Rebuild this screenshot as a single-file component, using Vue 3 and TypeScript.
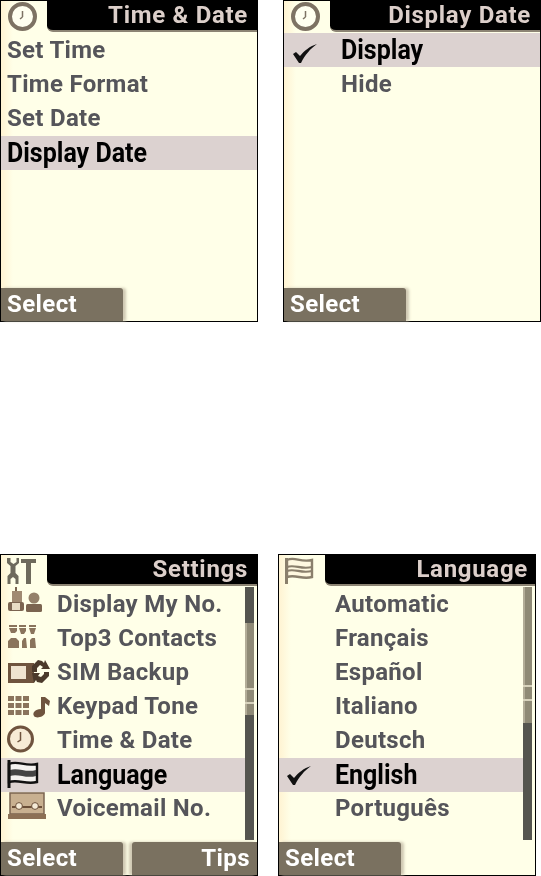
<script setup lang="ts">
interface Item {
  label: string
  icon?: string
  selected?: boolean
  checked?: boolean
}
interface Screen {
  title: string
  icon: string
  items: Item[]
  indent: 'plain' | 'tick' | 'icons' | 'lang'
  left: string
  right?: string
  scroll?: { top: number; track: number; grip: number }
}

const topRow: Screen[] = [
  {
    title: 'Time & Date',
    icon: 'clock',
    indent: 'plain',
    left: 'Select',
    items: [
      { label: 'Set Time' },
      { label: 'Time Format' },
      { label: 'Set Date' },
      { label: 'Display Date', selected: true },
    ],
  },
  {
    title: 'Display Date',
    icon: 'clock',
    indent: 'tick',
    left: 'Select',
    items: [{ label: 'Display', selected: true, checked: true }, { label: 'Hide' }],
  },
]

const bottomRow: Screen[] = [
  {
    title: 'Settings',
    icon: 'tools',
    indent: 'icons',
    left: 'Select',
    right: 'Tips',
    scroll: { top: 36, track: 92, grip: 65 },
    items: [
      { label: 'Display My No.', icon: 'people' },
      { label: 'Top3 Contacts', icon: 'top3' },
      { label: 'SIM Backup', icon: 'sim' },
      { label: 'Keypad Tone', icon: 'keypad' },
      { label: 'Time & Date', icon: 'clock' },
      { label: 'Language', icon: 'flag', selected: true },
      { label: 'Voicemail No.', icon: 'voicemail' },
    ],
  },
  {
    title: 'Language',
    icon: 'flagTab',
    indent: 'lang',
    left: 'Select',
    scroll: { top: 0, track: 136, grip: 98 },
    items: [
      { label: 'Automatic' },
      { label: 'Français' },
      { label: 'Español' },
      { label: 'Italiano' },
      { label: 'Deutsch' },
      { label: 'English', selected: true, checked: true },
      { label: 'Português' },
    ],
  },
]

const rows = [
  { key: 'top', screens: topRow },
  { key: 'bottom', screens: bottomRow },
]
</script>

<template>
  <div class="page">
    <div v-for="row in rows" :key="row.key" class="row" :class="row.key">
      <div v-for="s in row.screens" :key="s.title" class="screen">
        <header class="head">
          <div class="tab">
            <svg width="46" height="33" viewBox="0 0 46 33" class="ico">
              <template v-if="s.icon === 'clock'">
                <circle cx="21.5" cy="15.5" r="12.5" fill="#fffff0" stroke="#7d7263" stroke-width="4" />
                <path d="M21.5 10v6M21.5 16l-2.5 2" stroke="#7d7263" stroke-width="1.5" fill="none" />
              </template>
              <template v-else-if="s.icon === 'tools'">
                <path d="M6 3v5l3.500 3v7l-3 3v8h3v-5l2.500-2 2.500 2v5h3v-8l-3-3v-7l3.500-3V3h-2.500v4l-3 2-3-2V3z" fill="#6e6a5c" />
                <path d="M20 4h15v4h-5v21h-5V8h-5z" fill="#6e6a5c" />
              </template>
              <template v-else>
                <path d="M8 5c8-4 13 3 25 0v17c-10 3-16-3-25 0z" fill="#fff8e0" stroke="#8a7f6c" stroke-width="2.4" />
                <path d="M8 12c8-3 14 3 25 0M8 16c8-3 14 3 25 0" stroke="#8a7f6c" stroke-width="2.2" fill="none" />
                <path d="M7.5 3v26" stroke="#8a7f6c" stroke-width="3" />
              </template>
            </svg>
          </div>
          <div class="title"><span>{{ s.title }}</span></div>
        </header>

        <div class="body">
          <ul class="list">
            <li v-for="it in s.items" :key="it.label" class="item" :class="[{ sel: it.selected }, s.indent]">
              <svg v-if="it.checked" class="checkmark" width="25" height="20" viewBox="0 0 25 20">
                <path d="M1 11l3-2 4 4C12 8 18 3 25 1 18 6 13 12 9 20H7z" fill="#111" />
              </svg>
              <svg v-if="it.icon" class="mini" width="50" height="34" viewBox="0 0 50 34">
                <g v-if="it.icon === 'people'" fill="#7b6450">
                  <rect x="14" y="0" width="2" height="5" />
                  <rect x="11" y="4" width="10" height="12" fill="#a08a72" />
                  <rect x="7" y="15" width="16" height="9" rx="2" />
                  <rect x="11" y="16" width="8" height="7" fill="#e8dcc4" />
                  <circle cx="33" cy="11" r="5.5" fill="#94806a" />
                  <rect x="25" y="17" width="16" height="8" rx="1.5" />
                </g>
                <g v-else-if="it.icon === 'top3'" fill="#8a745c">
                  <rect x="8" y="4" width="8" height="2" />
                  <rect x="18" y="4" width="7" height="2" />
                  <rect x="28" y="4" width="7" height="2" />
                  <path d="M8 7h8v3l-2 2H10zM18 7h7v3l-2 3h-3zM28 7h7l-2 6h-3z" />
                  <path d="M7 27v-7l3-3h5l3 3v7zM21 27v-7l2-3h2l1 10zM29 27v-8l2-2h3l1 10z" />
                </g>
                <g v-else-if="it.icon === 'sim'">
                  <rect x="7" y="8" width="26" height="20" fill="#6f543e" />
                  <rect x="10" y="11" width="15" height="13" fill="#efe3cf" />
                  <path d="M37 5l4 1 2 2 1-3 5 9h-9l2-2-3-2-3 3v4h-5v-6z" fill="#4b3a2b" />
                  <path d="M31 18h8l-2 3 3 1 3-3v-2h5v4l-7 7-5-1-1-2-2 3z" fill="#4b3a2b" />
                </g>
                <g v-else-if="it.icon === 'keypad'" fill="#8a745c">
                  <rect x="7" y="7" width="6" height="5" />
                  <rect x="14.5" y="7" width="6" height="5" />
                  <rect x="22" y="7" width="6" height="5" />
                  <rect x="7" y="14" width="6" height="5" />
                  <rect x="14.5" y="14" width="6" height="5" />
                  <rect x="22" y="14" width="6" height="5" />
                  <rect x="7" y="21" width="6" height="5" />
                  <rect x="14.5" y="21" width="6" height="5" />
                  <rect x="22" y="21" width="6" height="5" />
                  <path d="M40 8h4l5 4-1 5-4-3v10c-1 4-9 6-11 3s1-7 7-7z" fill="#6f543e" />
                </g>
                <g v-else-if="it.icon === 'clock'">
                  <circle cx="19.5" cy="16" r="12" fill="#f7ecd6" stroke="#6f543e" stroke-width="3" />
                  <path d="M19.5 9v8l-3 2" stroke="#6f543e" stroke-width="1.5" fill="none" />
                </g>
                <g v-else-if="it.icon === 'flag'">
                  <path d="M8 6c9-4 16 3 28 0v18c-11 3-18-3-28 0z" fill="#f4f2ef" stroke="#111" stroke-width="2.4" />
                  <path d="M9 12c8-3 16 3 26 0v6c-10 3-18-3-26 0z" fill="#444" />
                  <path d="M8 2v28" stroke="#111" stroke-width="3" />
                </g>
                <g v-else>
                  <rect x="9" y="2" width="34" height="21" fill="#c8b090" stroke="#7b6450" stroke-width="1.5" />
                  <rect x="11" y="15" width="30" height="2" fill="#6b4f38" />
                  <circle cx="18" cy="15" r="3.4" fill="#f4ead6" stroke="#6b4f38" />
                  <circle cx="34" cy="15" r="3.4" fill="#f4ead6" stroke="#6b4f38" />
                  <rect x="7" y="23" width="38" height="5" fill="#8c7055" />
                </g>
              </svg>
              <span class="label">{{ it.label }}</span>
            </li>
          </ul>
          <div v-if="s.scroll" class="scroll">
            <div class="thumb" :style="{ height: s.scroll.top + 'px' }"></div>
            <div class="track" :style="{ height: s.scroll.track + 'px' }">
              <div class="grip" :style="{ top: s.scroll.grip + 'px' }"></div>
            </div>
            <div class="thumb rest"></div>
          </div>
        </div>

        <footer class="foot">
          <div class="key">{{ s.left }}</div>
          <div v-if="s.right" class="key right">{{ s.right }}</div>
        </footer>
      </div>
    </div>
  </div>
</template>

<style scoped>
.page {
  width: 541px;
  height: 876px;
  display: flex;
  flex-direction: column;
  font-family: Roboto, sans-serif;
  font-weight: 700;
  overflow: hidden;
  filter: blur(0.35px);
}
.row {
  display: flex;
  gap: 25px;
}
.row.bottom {
  margin-top: 232px;
  gap: 20px;
}
.screen {
  width: 258px;
  height: 322px;
  box-sizing: border-box;
  display: flex;
  flex-direction: column;
  border: 1px solid #000;
  background: linear-gradient(to right, #fff3d2, #ffffe8 12px);
}
.head {
  display: flex;
  height: 31px;
  flex-shrink: 0;
}
.tab {
  width: 46px;
  flex-shrink: 0;
}
.ico {
  display: block;
  overflow: visible;
}
.title {
  flex: 1;
  background: #000;
  color: #dccfca;
  text-align: right;
  padding-right: 9px;
  font-size: 24px;
  line-height: 29px;
  letter-spacing: 0.7px;
  border-bottom-left-radius: 6px;
  border-bottom: 2px solid #8c8474;
  box-sizing: border-box;
  white-space: nowrap;
}
.row.bottom .screen:last-child .title {
  padding-right: 7px;
}
.body {
  flex: 1;
  display: flex;
  min-height: 0;
}
.list {
  flex: 1;
  list-style: none;
  margin: 0;
  padding: 1px 0 0;
}
.item {
  display: flex;
  align-items: center;
  height: 34px;
  color: #55555a;
  font-size: 24px;
  letter-spacing: 0.3px;
  position: relative;
  white-space: nowrap;
}
.item.sel:not(:first-child) {
  margin-top: 1px;
}
.item.sel:not(:first-child) + .item {
  margin-top: -1px;
}
.item.plain .label {
  margin-left: 6px;
}
.item.tick .label {
  margin-left: 57px;
}
.item.lang .label {
  margin-left: 56px;
}
.item.icons .label {
  margin-left: 6px;
}
.item.sel {
  background: #dcd2d0;
  color: #000;
}
.item.sel .label {
  display: inline-block;
  transform: translateY(-1px) scaleY(1.14);
  font-size: 25px;
  letter-spacing: 0;
}
.checkmark {
  position: absolute;
  left: 7px;
  top: 7px;
}
.item.tick .checkmark {
  left: 8px;
  top: 10px;
}
.mini {
  flex-shrink: 0;
}
.scroll {
  width: 9px;
  flex-shrink: 0;
  display: flex;
  flex-direction: column;
  margin: 1px 3px 0 0;
  height: 253px;
}
.thumb {
  background: #55554f;
}
.thumb.rest {
  flex: 1;
}
.track {
  background: #8f8a76;
  border-left: 2px solid #b3ad98;
  box-sizing: border-box;
  position: relative;
}
.grip {
  position: absolute;
  left: -2px;
  right: 0;
  height: 12px;
  border-top: 2px solid #d8d3bd;
  border-bottom: 2px solid #d8d3bd;
}
.foot {
  display: flex;
  justify-content: space-between;
  height: 33px;
  flex-shrink: 0;
}
.key {
  width: 122px;
  background: #7a7160;
  box-shadow: 3px 0 3px #cfc8b2;
  color: #fff;
  padding-left: 6px;
  box-sizing: border-box;
  font-size: 24px;
  line-height: 32px;
  letter-spacing: 0.4px;
  border-top-right-radius: 3px;
}
.key.right {
  width: 125px;
  text-align: right;
  padding: 0 7px 0 0;
  box-shadow: -3px 0 3px #cfc8b2;
  border-top-left-radius: 3px;
  border-top-right-radius: 0;
}
</style>

<style>
html,
body {
  background: #fff;
}
</style>
